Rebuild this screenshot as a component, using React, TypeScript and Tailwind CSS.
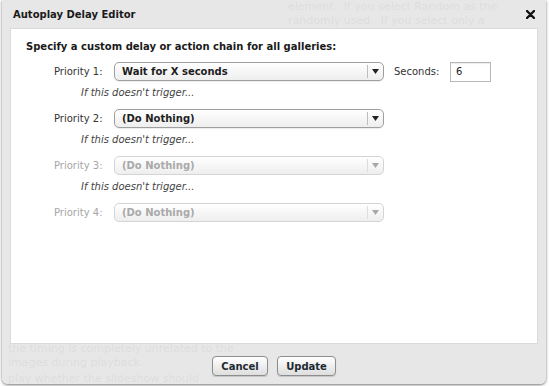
import clsx from "clsx";

const Arrow = ({ disabled }: { disabled?: boolean }) => (
  <svg width="7" height="5" viewBox="0 0 7 5">
    <path d="M0 0 H7 L3.5 5 Z" fill={disabled ? "#a8a8a8" : "#222"} />
  </svg>
);

const Select = ({ value, disabled }: { value: string; disabled?: boolean }) => {
  return (
    <div
      className={clsx(
        "flex h-[19px] w-[270px] items-center rounded-[5px] border bg-gradient-to-b from-white to-[#eeeeee]",
        disabled
          ? "border-[#d4d4d4] text-[#a9a9a9]"
          : "border-[#9f9f9f] text-[#1e1e1e] shadow-[0_1px_1px_rgba(0,0,0,0.08)]"
      )}
    >
      <span className="flex-1 pl-[7px] font-bold leading-none">{value}</span>
      <span
        className={clsx(
          "flex h-[13px] w-[16px] items-center justify-center border-l",
          disabled ? "border-[#dddddd]" : "border-[#bdbdbd]"
        )}
      >
        <Arrow disabled={disabled} />
      </span>
    </div>
  );
};

const Row = ({
  label,
  value,
  disabled,
  children,
}: {
  label: string;
  value: string;
  disabled?: boolean;
  children?: React.ReactNode;
}) => (
  <div className="flex h-[19px] items-center pl-[43px]">
    <span className={clsx("w-[60px]", disabled ? "text-[#a6a6a6]" : "text-[#333]")}>{label}</span>
    <Select value={value} disabled={disabled} />
    {children}
  </div>
);

const Fallback = () => (
  <div className="h-[28px] pl-[70px] pt-[6px] italic leading-[12px] text-[#444]">
    If this doesn't trigger...
  </div>
);

export default function App() {
  return (
    <div className="relative h-[386px] w-[549px] overflow-hidden bg-white font-['DejaVu_Sans',sans-serif] text-[10px]">
      {/* page behind the dialog */}
      <div className="grid h-full grid-cols-[288px_1fr] overflow-hidden whitespace-nowrap text-[11px] leading-[14px] text-[#777]">
        <div className="pl-[8px] pt-[342px]">
          <p>the timing is completely unrelated to the</p>
          <p>images during playback.</p>
          <p className="mt-[3px] leading-[12px]">play whether the slideshow should</p>
        </div>
        <div className="overflow-hidden pt-0">
          <p>element.&nbsp; If you select Random as the</p>
          <p>randomly used.&nbsp; If you select only a</p>
        </div>
      </div>

      {/* dialog */}
      <div className="absolute left-[2px] top-0 flex h-[384px] w-[544px] flex-col rounded-b-[6px] bg-[#e5e5e5]/[0.92] shadow-[0_1px_3px_rgba(0,0,0,0.55)]">
        <div className="flex h-[28px] items-center justify-between pl-[11px] pr-[11px]">
          <span className="font-bold text-[#1a1a1a]">Autoplay Delay Editor</span>
          <svg width="9" height="9" viewBox="0 0 9 9">
            <path d="M1 1 L8 8 M8 1 L1 8" stroke="#111" strokeWidth="2.4" strokeLinecap="round" />
          </svg>
        </div>

        <div className="mx-[8px] h-[316px] border border-[#dadada] bg-white pl-[15px] pt-[12px]">
          <p className="mb-[9px] font-bold leading-[12px] text-[#1a1a1a]">
            Specify a custom delay or action chain for all galleries:
          </p>
          <div className="-ml-[15px]">
            <Row label="Priority 1:" value="Wait for X seconds">
              <span className="ml-[10px] w-[56px] text-[#333]">Seconds:</span>
              <input
                readOnly
                value="6"
                className="h-[20px] w-[41px] border border-[#b8b8b8] px-[5px] text-[10px] text-[#222] outline-none shadow-[inset_0_1px_1px_rgba(0,0,0,0.08)]"
              />
            </Row>
            <Fallback />
            <Row label="Priority 2:" value="(Do Nothing)" />
            <Fallback />
            <Row label="Priority 3:" value="(Do Nothing)" disabled />
            <Fallback />
            <Row label="Priority 4:" value="(Do Nothing)" disabled />
          </div>
        </div>

        <div className="flex justify-center gap-[9px] pt-[12px]">
          <button className="h-[20px] w-[56px] rounded-[4px] border border-[#8d8d8d] bg-gradient-to-b from-white to-[#dedede] font-bold text-[#1e2a33] shadow-[0_1px_1px_rgba(0,0,0,0.15)]">
            Cancel
          </button>
          <button className="h-[20px] w-[59px] rounded-[4px] border border-[#8d8d8d] bg-gradient-to-b from-white to-[#dedede] font-bold text-[#1e2a33] shadow-[0_1px_1px_rgba(0,0,0,0.15)]">
            Update
          </button>
        </div>
      </div>
    </div>
  );
}
